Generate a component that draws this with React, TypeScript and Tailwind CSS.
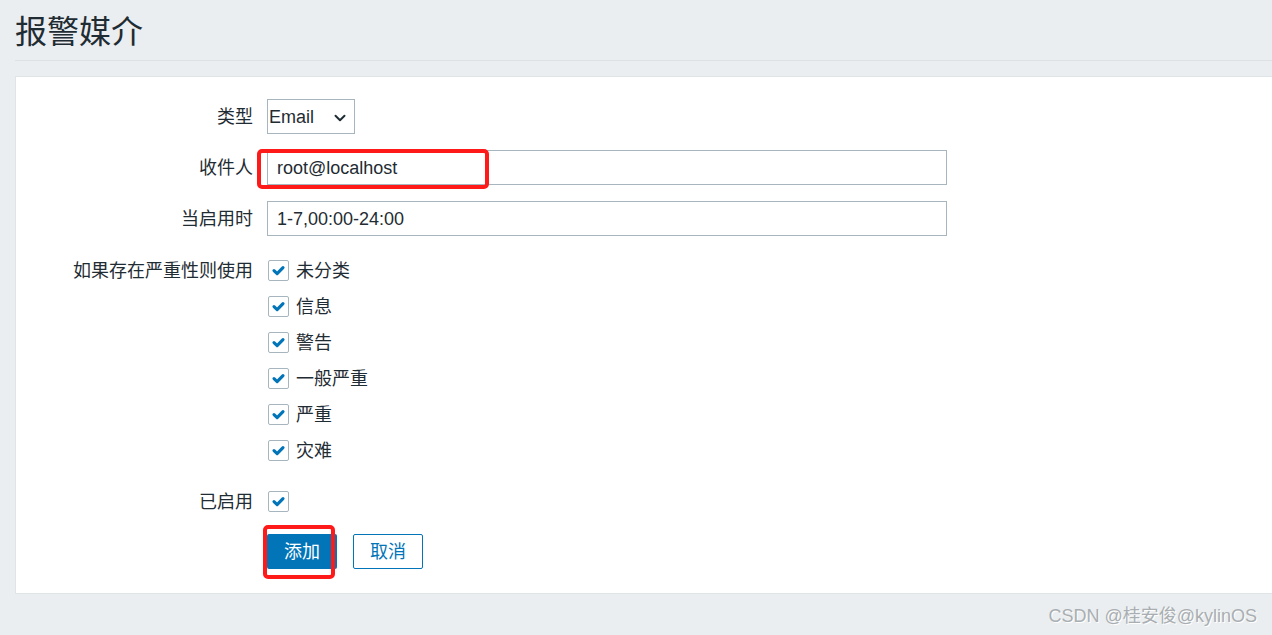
import { ChevronDown } from 'lucide-react';

const severities = ['未分类', '信息', '警告', '一般严重', '严重', '灾难'];

function CheckBox() {
    return (
        <span className="flex h-[21px] w-[21px] items-center justify-center rounded-[2px] border border-[#a7b5be] bg-white">
            <svg viewBox="0 0 12 12" className="h-[15px] w-[15px]">
                <path d="M2.4 6.1 L4.9 8.5 L9.6 3.7" fill="none" stroke="#0275b8" strokeWidth="2.5" strokeLinecap="round" strokeLinejoin="round" />
            </svg>
        </span>
    );
}

export default function App() {
    return (
        <div
            className="relative h-[635px] w-[1272px] overflow-hidden bg-[#ebeef0] text-[#1f2c33]"
            style={{ fontFamily: '"Liberation Sans", "Noto Sans CJK SC", sans-serif' }}
        >
            <div className="ml-[15px] flex h-[61px] items-center border-b border-[#dce1e4] pt-[3px]">
                <h1 className="text-[32px] font-normal leading-none">报警媒介</h1>
            </div>

            <div className="ml-[15px] mt-[15px] h-[518px] w-[1262px] border border-[#dfe4e7] bg-white pt-[22px]">
                <div className="grid grid-cols-[237px_1fr] gap-x-[14px] text-[18px]">
                    {/* type */}
                    <div className="flex h-[35px] items-center justify-end pt-[2px]">类型</div>
                    <div className="flex h-[35px] items-center">
                        <div className="flex h-[35px] w-[88px] items-center justify-between border border-[#a7b5be] pl-[1px] pr-[5px] pt-[2px]">
                            <span>Email</span>
                            <ChevronDown className="h-[18px] w-[18px]" strokeWidth={2.6} />
                        </div>
                    </div>

                    {/* send to */}
                    <div className="mt-[16px] flex h-[35px] items-center justify-end pt-[2px]">收件人</div>
                    <div className="mt-[16px] flex h-[35px] w-[680px] items-center border border-[#a7b5be] pl-[9px] pt-[2px]">
                        root@localhost
                    </div>

                    {/* when active */}
                    <div className="mt-[16px] flex h-[35px] items-center justify-end pt-[2px]">当启用时</div>
                    <div className="mt-[16px] flex h-[35px] w-[680px] items-center border border-[#a7b5be] pl-[9px] pt-[2px]">
                        1-7,00:00-24:00
                    </div>

                    {/* severity */}
                    <div className="mt-[16px] flex h-[36px] items-center justify-end self-start pt-[2px]">如果存在严重性则使用</div>
                    <div className="mt-[16px] flex flex-col">
                        {severities.map((s) => (
                            <label key={s} className="flex h-[36px] items-center gap-[7px] pl-[1px]">
                                <CheckBox />
                                <span className="pt-[2px]">{s}</span>
                            </label>
                        ))}
                    </div>

                    {/* enabled */}
                    <div className="mt-[15px] flex h-[36px] items-center justify-end pt-[2px]">已启用</div>
                    <div className="mt-[15px] flex h-[36px] items-center pl-[1px]">
                        <CheckBox />
                    </div>

                    {/* buttons */}
                    <div />
                    <div className="mt-[15px] flex gap-[16px]">
                        <button className="h-[35px] w-[70px] rounded-[2px] bg-[#0275b8] pt-[2px] text-white">添加</button>
                        <button className="h-[35px] w-[70px] rounded-[2px] border border-[#0275b8] bg-white pt-[2px] text-[#0275b8]">取消</button>
                    </div>
                </div>
            </div>

            <div className="flex justify-end pr-[15px] pt-[9px]">
                <span className="text-[18px] text-[#a9aeb2] [text-shadow:1px_1px_0_#ffffff]">CSDN @桂安俊@kylinOS</span>
            </div>

            {/* red annotation boxes */}
            <div className="absolute left-[257px] top-[149px] h-[40px] w-[232px] rounded-[5px] border-[4px] border-[#ff1a1a]" />
            <div className="absolute left-[263px] top-[525px] h-[54px] w-[72px] rounded-[5px] border-[4px] border-[#ff1a1a]" />
        </div>
    );
}
